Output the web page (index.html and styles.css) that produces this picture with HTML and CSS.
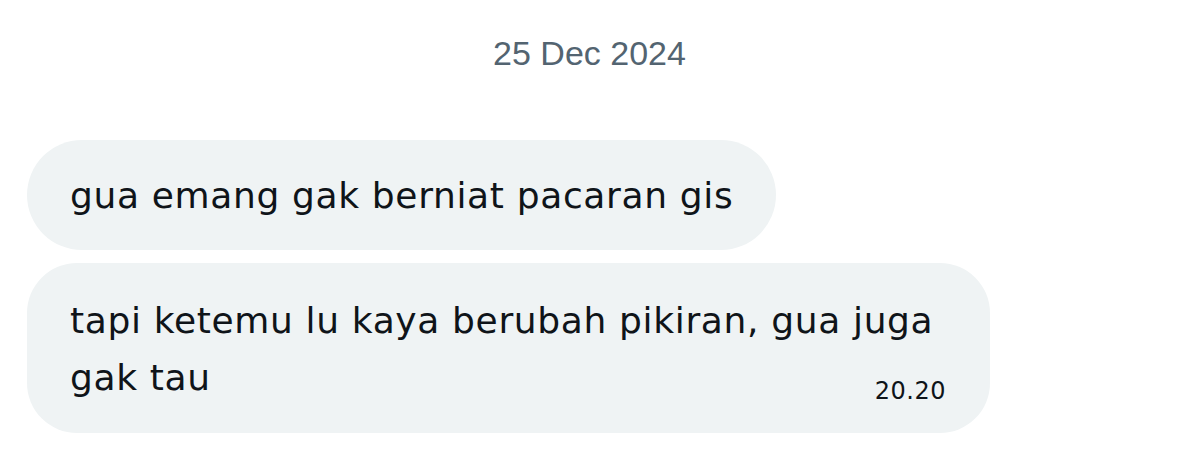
FILE: index.html
```html
<!DOCTYPE html>
<html lang="id">
<head>
<meta charset="utf-8">
<title>Chat</title>
<link rel="stylesheet" href="styles.css">
</head>
<body>
<main class="chat">
  <div class="date">25 Dec 2024</div>
  <div class="messages">
    <div class="bubble bubble-short">
      <p class="text">gua emang gak berniat pacaran gis</p>
    </div>
    <div class="bubble bubble-long">
      <p class="text">tapi ketemu lu kaya berubah pikiran, gua juga gak tau<span class="time">20.20</span></p>
    </div>
  </div>
</main>
</body>
</html>
```

FILE: styles.css
```css
* { box-sizing: border-box; }
html, body {
  margin: 0;
  padding: 0;
  background: #ffffff;
}
.chat {
  width: 1179px;
  height: 458px;
  overflow: hidden;
  padding: 33px 0 0 27px;
}
.date {
  font-family: "Liberation Sans", Arial, sans-serif;
  font-size: 34px;
  line-height: 40px;
  color: #536471;
  text-align: center;
  margin-left: -27px;
}
.messages {
  display: flex;
  flex-direction: column;
  align-items: flex-start;
  gap: 13px;
  margin-top: 67px;
}
.bubble {
  background: #eff3f4;
  color: #0f1419;
  font-family: "DejaVu Sans", sans-serif;
  font-size: 36px;
  letter-spacing: 0.65px;
}
.text {
  margin: 0;
  line-height: 57px;
}
.bubble-short {
  width: 749px;
  height: 110px;
  padding: 27px 30px 26px 43px;
  border-radius: 55px;
}
.bubble-long {
  width: 963px;
  height: 170px;
  padding: 29px 30px 26px 43px;
  border-radius: 50px;
}
.time {
  float: right;
  font-size: 24px;
  letter-spacing: 0.5px;
  line-height: 30px;
  margin-top: 27px;
  margin-right: 14px;
  color: #0f1419;
}
```
